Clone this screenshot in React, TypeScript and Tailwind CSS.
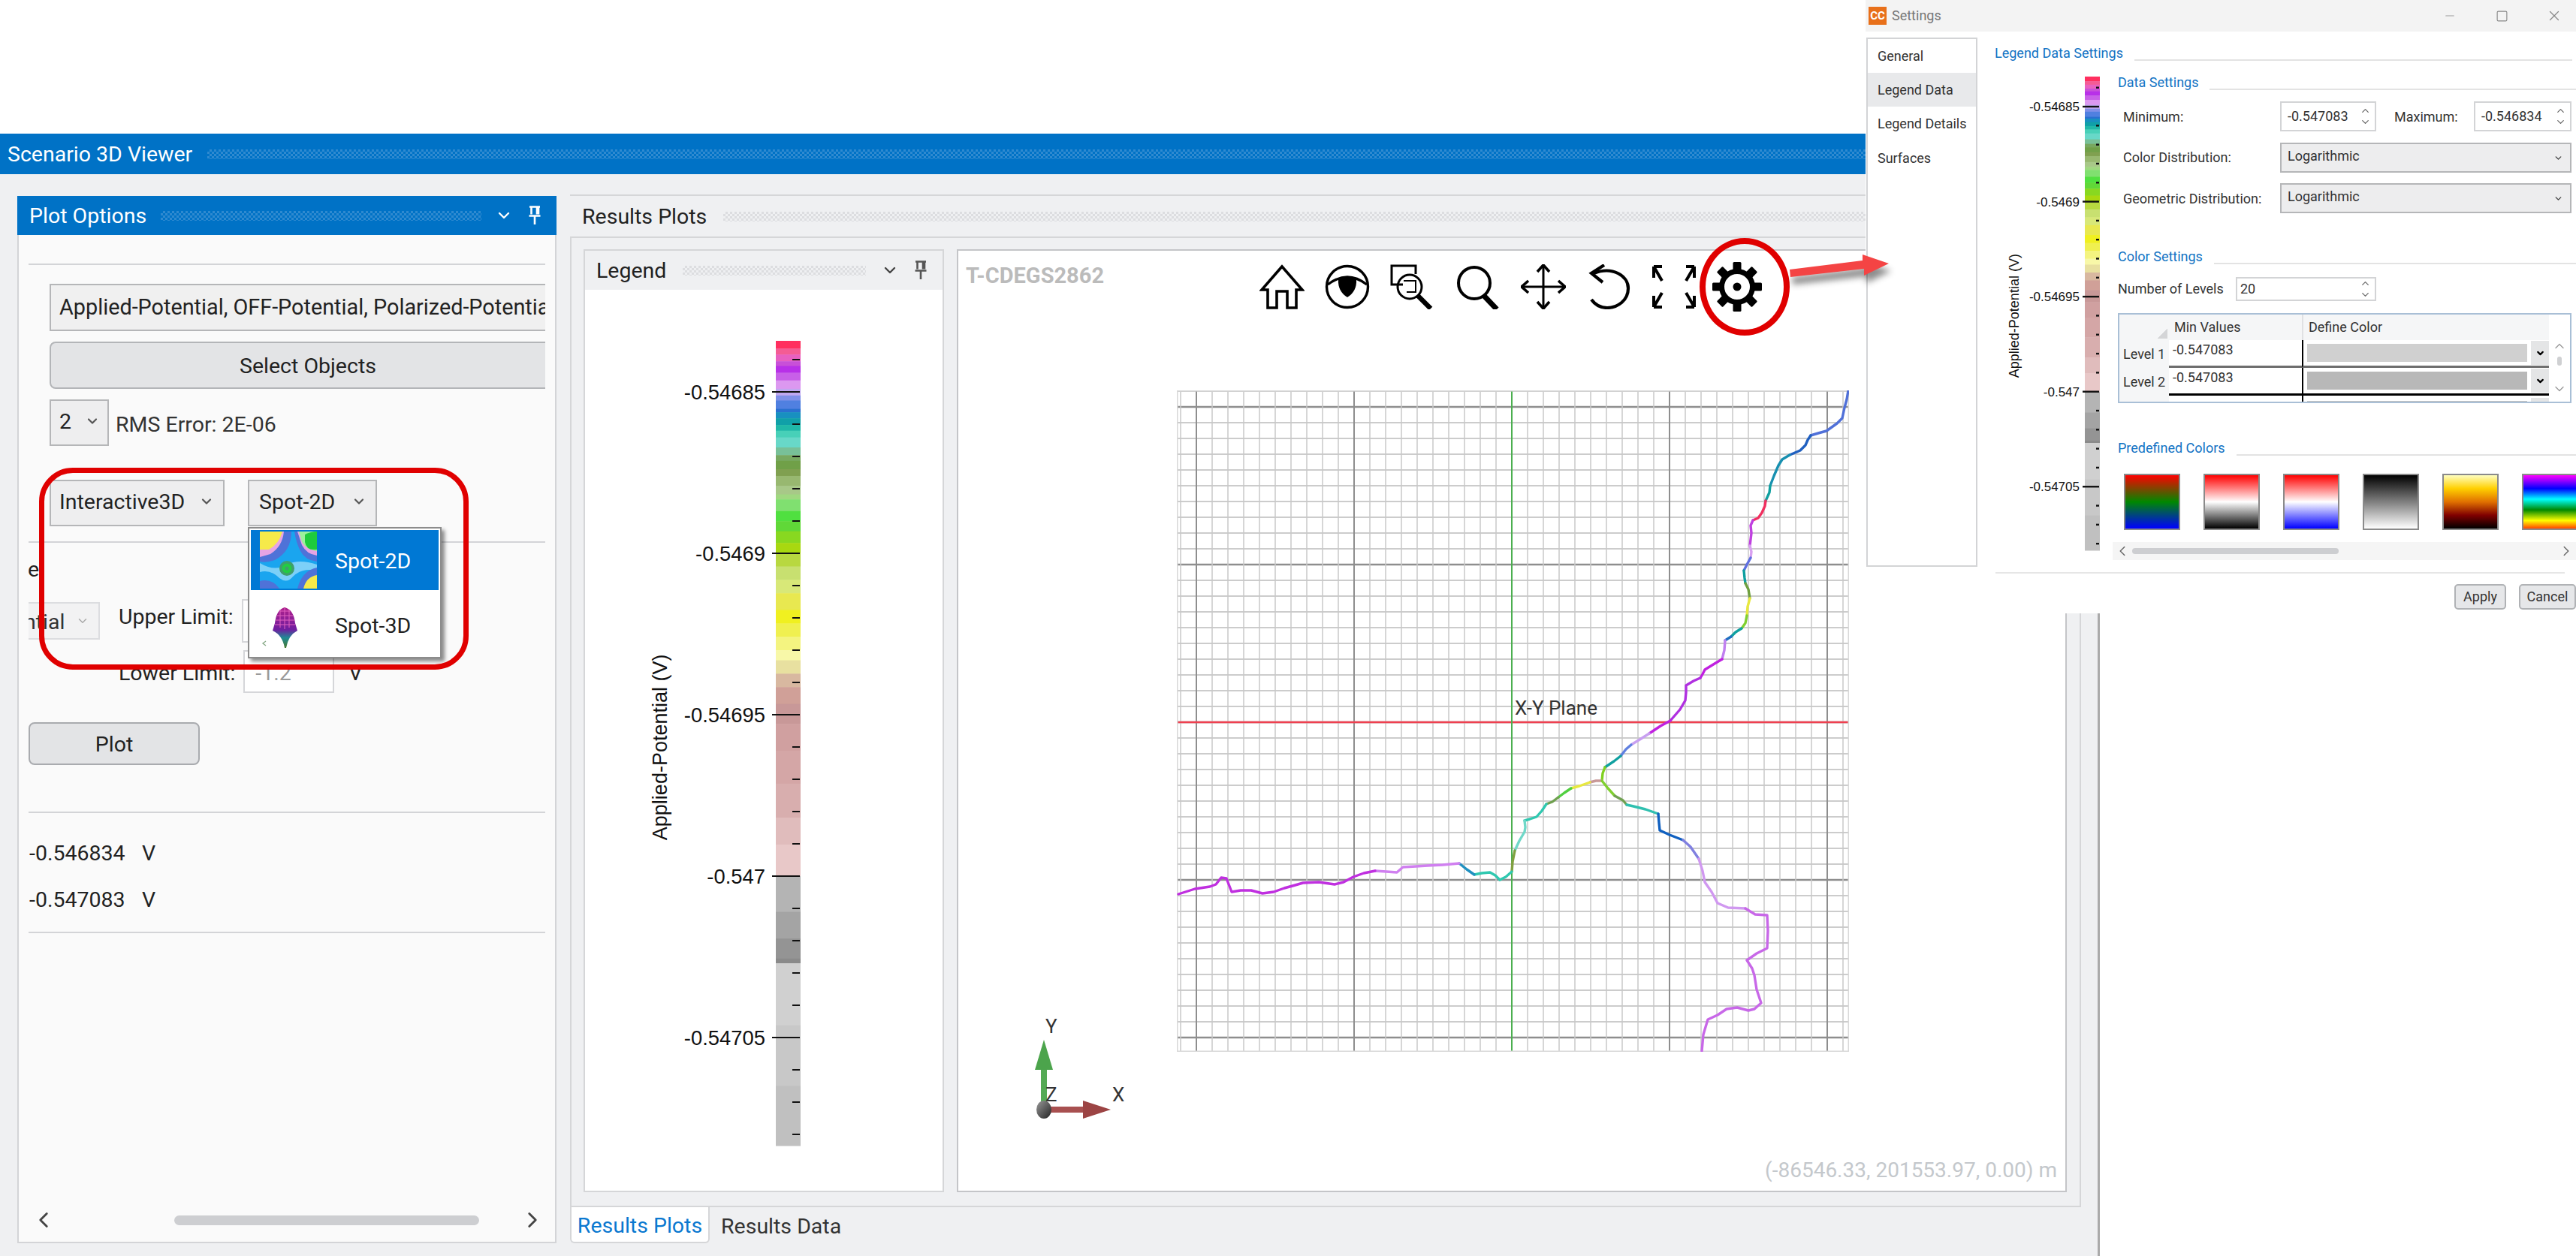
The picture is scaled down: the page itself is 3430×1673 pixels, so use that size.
import { ChevronDown, ChevronLeft, ChevronRight, ChevronUp, Minus, Square, X } from "lucide-react"

const gripBlue =
  "h-[13px] flex-1 bg-[repeating-conic-gradient(#2f8ad0_0_25%,transparent_0_50%)] bg-[length:6px_6px]"
const gripGray =
  "h-[13px] flex-1 bg-[repeating-conic-gradient(#dcdde0_0_25%,transparent_0_50%)] bg-[length:6px_6px]"

// colour bands of the legend, [position, colour]
const bands: [number, string][] = [
  [477, "#ff2f5f"], [500, "#f45c94"], [518, "#e860c0"], [538, "#c850d8"], [552, "#b830e8"],
  [572, "#c860e8"], [595, "#dc98f0"], [620, "#c0a8f0"], [640, "#8090e8"], [655, "#5080e0"],
  [680, "#2a70d0"], [690, "#1890c0"], [708, "#10a0a8"], [728, "#20b8a8"], [745, "#48d0b8"],
  [765, "#68d8c8"], [795, "#78c098"], [818, "#78a860"], [835, "#70a048"], [860, "#80a050"],
  [880, "#98b870"], [910, "#a8c888"], [935, "#a0d880"], [950, "#80e070"], [985, "#50e040"],
  [1015, "#60d838"], [1045, "#88d820"], [1080, "#a8d810"], [1110, "#b8d840"], [1150, "#c8e070"],
  [1190, "#d8e878"], [1230, "#e8e850"], [1280, "#f0f020"], [1320, "#f0f050"], [1360, "#f4f480"],
  [1400, "#f8f8a8"], [1430, "#e8e0a0"], [1470, "#d8b8a0"], [1510, "#d0a098"], [1560, "#c89898"],
  [1620, "#d0a0a0"], [1700, "#d4a6a6"], [1798, "#d8aeae"], [1900, "#e0bcbc"], [1980, "#e8c8c8"],
  [2074, "#b4b4b4"], [2180, "#a4a4a4"], [2260, "#949494"], [2320, "#8a8a8a"], [2334, "#d0d0d0"],
  [2518, "#c8c8c8"], [2700, "#c0c0c0"], [2878, "#b8b8b8"],
]

const majorLabels = ["-0.54685", "-0.5469", "-0.54695", "-0.547", "-0.54705"]

function LegendBar({
  width,
  height,
  barX,
  barY,
  barW,
  barH,
  labelSize,
  titleSize,
  titleX,
  majorOver,
  minorLen,
  tickW,
  labelGap,
}: {
  width: number
  height: number
  barX: number
  barY: number
  barW: number
  barH: number
  labelSize: number
  titleSize: number
  titleX: number
  majorOver: number
  minorLen: number
  tickW: number
  labelGap: number
}) {
  const pos = (z: number) => barY + ((z - 477) / 2401) * barH
  const tick = (k: number) => barY + ((68 + k * 43) / 1072) * barH
  const ks = Array.from({ length: 25 }, (_, i) => i - 1)
  const titleY = barY + barH * 0.505

  return (
    <svg width={width} height={height} className="shrink-0 font-['Liberation_Sans',sans-serif]">
      {bands.slice(0, -1).map(([z, c], i) => (
        <rect key={z} x={barX} y={pos(z)} width={barW} height={pos(bands[i + 1][0]) - pos(z) + 0.5} fill={c} />
      ))}
      {ks.map((k) =>
        k % 5 === 0 ? (
          <line key={k} x1={barX - majorOver} x2={barX + barW - 1} y1={tick(k)} y2={tick(k)} stroke="#111" strokeWidth={tickW} />
        ) : (
          <line key={k} x1={barX + barW - minorLen - 1} x2={barX + barW - 1} y1={tick(k)} y2={tick(k)} stroke="#111" strokeWidth={tickW} />
        ),
      )}
      {majorLabels.map((label, i) => (
        <text key={label} x={barX - majorOver - labelGap} y={tick(i * 5) + labelSize * 0.36} textAnchor="end" fontSize={labelSize} fill="#111">
          {label}
        </text>
      ))}
      <text
        x={titleX}
        y={titleY}
        fontSize={titleSize}
        fill="#111"
        textAnchor="middle"
        transform={`rotate(-90 ${titleX} ${titleY})`}
      >
        Applied-Potential (V)
      </text>
    </svg>
  )
}

function Pin({ color }: { color: string }) {
  return (
    <svg width="18" height="26" viewBox="0 0 18 26" fill="none">
      <path d="M2 1.5h14M4.5 1.5v10M12 1.5v10M14 1.5v10M1.5 13.5h15M9 14v11" stroke={color} strokeWidth="2.6" />
    </svg>
  )
}

function Combo({ label, className, textClass }: { label: string; className: string; textClass?: string }) {
  return (
    <div className={`flex shrink-0 items-center justify-between border-2 border-[#b5b6b8] bg-[#eeeeef] ${className}`}>
      <span className={`-mt-[3px] whitespace-nowrap ${textClass ?? ""}`}>{label}</span>
      <ChevronDown size={20} strokeWidth={2.6} className="-mt-[4px] shrink-0 text-[#555]" />
    </div>
  )
}

function Spot2DIcon() {
  return (
    <svg width="76" height="76" viewBox="0 0 76 76">
      <rect width="76" height="76" fill="#1aa5ef" />
      <path d="M0 42 Q20 54 36 44 Q52 36 76 44 V52 Q56 48 44 60 Q36 70 26 62 Q14 50 0 54Z" fill="#7cd0f8" />
      <path d="M0 0 H42 Q42 26 20 38 Q8 42 0 40Z" fill="#4f72d8" />
      <path d="M0 0 H32 Q30 20 14 30 L0 34Z" fill="#e6a4e4" />
      <path d="M0 0 H30 Q26 16 12 24 L0 24Z" fill="#f6ea4a" />
      <path d="M46 0 H76 V40 Q60 38 54 26 Q48 14 46 0Z" fill="#4f72d8" />
      <path d="M50 0 H76 V32 Q62 30 56 18Z" fill="#e6a4e4" />
      <path d="M52 0 H76 V26 Q62 24 56 14Z" fill="#9cf09c" />
      <path d="M60 4 Q68 0 76 0 V24 Q62 26 60 14Z" fill="#1ecb3c" />
      <circle cx="36" cy="49" r="10" fill="#3f9e6c" />
      <circle cx="36" cy="49" r="6.5" fill="#22cc44" />
      <circle cx="36" cy="49" r="2.5" fill="#3f9e6c" />
      <path d="M76 48 Q56 52 50 76 H76Z" fill="#4f72d8" />
      <path d="M76 58 Q62 60 58 76 H76Z" fill="#f6ea4a" />
      <path d="M0 66 Q16 62 26 76 H0Z" fill="#4f72d8" />
    </svg>
  )
}

function Spot3DIcon() {
  return (
    <svg width="76" height="76" viewBox="0 0 76 76">
      <defs>
        <linearGradient id="dome" x1="0" x2="0" y1="0" y2="1">
          <stop offset="0" stopColor="#b0208c" />
          <stop offset="0.55" stopColor="#6f1fa0" />
          <stop offset="0.75" stopColor="#1f8a94" />
          <stop offset="1" stopColor="#4a7a30" />
        </linearGradient>
      </defs>
      <path d="M33 17 Q45 20 47 38 L50 48 Q38 54 35 71 H33 Q30 54 17 48 L20 38 Q22 20 33 17Z" fill="url(#dome)" />
      <path d="M27 22H40M23 28H44M21 34H46M20 40H47M27 20V44M33 18V46M39 20V44" stroke="#e060c0" strokeWidth="1" />
      <path d="M8 62l-4 3 4 3" stroke="#8a8" strokeWidth="1.4" fill="none" />
    </svg>
  )
}

function PlotOptions() {
  return (
    <div className="flex h-full w-[718px] shrink-0 flex-col border-x-2 border-b-2 border-[#d3d4d7] bg-[#fafafa]">
      <div className="-mx-[2px] flex h-[52px] shrink-0 items-center bg-[#0072c6] pl-[16px] pr-[20px] text-white">
        <span className="mt-[2px] whitespace-nowrap">Plot Options</span>
        <div className={`ml-[19px] ${gripBlue}`} />
        <ChevronDown size={24} strokeWidth={2.4} className="ml-[18px]" />
        <div className="ml-[20px]">
          <Pin color="#fff" />
        </div>
      </div>

      <div className="mx-[13px] mt-[38px] flex flex-1 flex-col overflow-hidden">
        <div className="h-[2px] shrink-0 bg-[#d3d4d7]" />
        <div className="ml-[28px] mt-[25px] flex h-[63px] w-[700px] shrink-0 items-center border-2 border-[#b5b6b8] bg-[#f0f0f0] pl-[11px]">
          <span className="-mt-[2px] whitespace-nowrap text-[28.8px]">Applied-Potential, OFF-Potential, Polarized-Potentia</span>
        </div>
        <div className="ml-[28px] mt-[14px] flex h-[63px] w-[688px] shrink-0 items-center justify-center rounded-[8px] border-2 border-[#b3b5b8] bg-[#e3e4e6] pt-[3px]">
          Select Objects
        </div>
        <div className="ml-[28px] mt-[14px] flex shrink-0 items-center">
          <Combo label="2" className="h-[62px] w-[79px] pl-[11px] pr-[10px]" />
          <span className="ml-[9px] mt-[5px] whitespace-nowrap text-[#333]">RMS Error: 2E-06</span>
        </div>
        <div className="ml-[28px] mt-[45px] flex shrink-0 items-center">
          <Combo label="Interactive3D" className="h-[62px] w-[233px] pl-[11px] pr-[12px]" />
          <Combo label="Spot-2D" className="ml-[31px] h-[62px] w-[172px] pl-[13px] pr-[12px]" />
        </div>
        <div className="mt-[20px] h-[2px] shrink-0 bg-[#d3d4d7]" />
        <div className="mt-[18px] h-[36px] shrink-0 -translate-x-[1px] text-[#222]">e:</div>

        <div className="mt-[21px] flex h-[58px] shrink-0 items-center">
          <div className="flex h-[50px] w-[95px] items-center justify-between overflow-hidden border-y-2 border-r-2 border-[#dcdde0] bg-[#f2f2f3] pr-[12px]">
            <span className="-ml-[6px] mt-[4px] text-[#333]">ntial</span>
            <ChevronDown size={18} strokeWidth={2} className="text-[#aaa]" />
          </div>
          <span className="ml-[25px] -mt-[10px] whitespace-nowrap">Upper Limit:</span>
          <div className="ml-[11px] h-[58px] w-[121px] border-2 border-[#d5d6d9] bg-white" />
        </div>
        <div className="mt-[10px] flex h-[57px] shrink-0 items-center">
          <span className="ml-[120px] mt-[4px] whitespace-nowrap">Lower Limit:</span>
          <div className="ml-[11px] flex h-[57px] w-[121px] items-center border-2 border-[#d5d6d9] bg-white pl-[14px] pt-[4px] text-[#9a9a9a]">
            -1.2
          </div>
          <span className="ml-[19px] mt-[4px]">V</span>
        </div>

        <div className="mt-[39px] flex h-[57px] w-[228px] shrink-0 items-center justify-center rounded-[8px] border-2 border-[#a9abaf] bg-[#e3e4e6] pt-[2px]">
          Plot
        </div>
        <div className="mt-[62px] h-[2px] shrink-0 bg-[#d3d4d7]" />
        <div className="mt-[37px] flex h-[34px] shrink-0 items-center">
          <span className="w-[150px] pl-[1px]">-0.546834</span>
          <span className="ml-[1px]">V</span>
        </div>
        <div className="mt-[28px] flex h-[34px] shrink-0 items-center">
          <span className="w-[150px] pl-[1px]">-0.547083</span>
          <span className="ml-[1px]">V</span>
        </div>
        <div className="mt-[25px] h-[2px] shrink-0 bg-[#d3d4d7]" />

        <div className="mb-[12px] mt-auto flex shrink-0 items-center">
          <ChevronLeft size={34} strokeWidth={2} className="ml-[3px] text-[#444]" />
          <div className="ml-[157px] h-[13px] w-[406px] rounded-full bg-[#cdced1]" />
          <ChevronRight size={34} strokeWidth={2} className="ml-[54px] text-[#444]" />
        </div>
      </div>
    </div>
  )
}

function ToolbarIcons() {
  const gearAngles = [0, 45, 90, 135, 180, 225, 270, 315]
  return (
    <div className="flex items-center gap-[27px] text-black">
      <svg width="60" height="60" viewBox="0 0 60 60" fill="none" stroke="currentColor" strokeWidth="3.6">
        <path d="M30 3 L3 34 H11 V58 H23 V36 H37 V58 H49 V34 H57 Z" strokeLinejoin="miter" />
      </svg>
      <svg width="60" height="60" viewBox="0 0 60 60" fill="none" stroke="currentColor" strokeWidth="3.4">
        <circle cx="30" cy="30" r="27.5" />
        <path d="M4 27 Q30 7 56 27" />
        <path d="M18 20 Q30 14 42 20 Q43 36 30 44 Q17 36 18 20Z" fill="currentColor" stroke="none" />
      </svg>
      <svg width="60" height="60" viewBox="0 0 60 60" fill="none" stroke="currentColor" strokeWidth="3">
        <path d="M17 27 H2 V2 H34 V13" />
        <circle cx="26" cy="30" r="16" />
        <path d="M18 22 H34 V37 H22" strokeWidth="2" />
        <path d="M37 42 L54 59" strokeWidth="6.5" />
      </svg>
      <svg width="60" height="60" viewBox="0 0 60 60" fill="none" stroke="currentColor" strokeWidth="4">
        <circle cx="25" cy="25" r="21" />
        <path d="M38 42 L55 60" strokeWidth="7" />
      </svg>
      <svg width="60" height="60" viewBox="0 0 60 60" fill="none" stroke="currentColor" strokeWidth="3">
        <path d="M2 30 H58 M30 2 V58" />
        <path d="M22 10 L30 1 L38 10 M22 50 L30 59 L38 50 M10 22 L1 30 L10 38 M50 22 L59 30 L50 38" strokeWidth="3.6" />
      </svg>
      <svg width="60" height="60" viewBox="0 0 60 60" fill="none" stroke="currentColor" strokeWidth="4.2">
        <path d="M10 12 C 36 2, 56 16, 56 32 C 56 48, 42 58, 28 58 C 20 58, 12 54, 7 47" />
        <path d="M24 1 L7 12 L22 24" />
      </svg>
      <svg width="60" height="60" viewBox="0 0 60 60" fill="none" stroke="currentColor" strokeWidth="4">
        <path d="M3 3 H14 M3 3 V18 M3 3 L14 22" />
        <path d="M57 3 H46 M57 3 V18 M57 3 L46 22" />
        <path d="M3 57 H14 M3 57 V42 M3 57 L14 38" />
        <path d="M57 57 H46 M57 57 V42 M57 57 L46 38" />
      </svg>
      <svg width="66" height="68" viewBox="0 0 66 68" className="-ml-[6px]" fill="none" stroke="currentColor">
        {gearAngles.map((a) => (
          <rect key={a} x="27.5" y="1" width="11" height="13" rx="1.5" fill="currentColor" stroke="none" transform={`rotate(${a} 33 34)`} />
        ))}
        <circle cx="33" cy="34" r="20.5" strokeWidth="7" />
        <circle cx="33" cy="34" r="5.5" fill="currentColor" stroke="none" />
      </svg>
    </div>
  )
}

const segmentsTop: [string, string][] = [
  ["#5070d8", "2460,520 2458,532 2455,543 2452,557 2445,564 2431,574 2420,577 2410,580"],
  ["#2060c0", "2410,580 2406,586 2403,593 2396,600 2382,606"],
  ["#1890b0", "2382,606 2372,612 2367,620 2361,634 2356,647"],
  ["#10a0a0", "2356,647 2355,656 2350,667"],
  ["#f03060", "2350,667 2349,674 2345,683 2340,690 2333,693"],
  ["#c040e0", "2333,693 2330,700 2331,710 2329,727"],
  ["#d8a0f0", "2329,727 2331,735 2330,743"],
  ["#6070e0", "2330,743 2325,752 2321,760"],
  ["#10a0a0", "2321,760 2322,770 2323,777"],
  ["#70a040", "2323,777 2327,785 2329,797"],
  ["#e8e840", "2329,797 2326,808 2325,820"],
  ["#80d030", "2325,820 2323,830 2318,837"],
  ["#10a0a0", "2318,837 2310,842 2304,848"],
  ["#2070c0", "2304,848 2296,853"],
  ["#c080f0", "2296,853 2295,866 2292,878"],
  ["#c020e0", "2292,878 2282,884 2269,892 2266,898 2263,903"],
  ["#b030e0", "2263,903 2254,907 2244,913 2244,922 2243,933 2236,945 2223,960"],
  ["#c020e0", "2223,960 2210,967 2195,977"],
  ["#c8a0f0", "2195,977 2184,984 2171,992"],
  ["#6080e0", "2171,992 2164,998 2157,1007"],
  ["#10a0a0", "2157,1007 2148,1014 2136,1022"],
  ["#80d020", "2136,1022 2133,1030 2132,1040"],
  ["#c89898", "2132,1040 2124,1040 2116,1042"],
  ["#e8e840", "2116,1042 2102,1047 2091,1050"],
  ["#50d040", "2091,1050 2082,1056 2074,1062"],
  ["#70a050", "2074,1062 2066,1068 2058,1071"],
  ["#30c8b0", "2058,1071 2052,1080 2045,1088 2036,1091 2029,1093"],
  ["#70d8c8", "2029,1093 2030,1102 2029,1108 2022,1120 2016,1133"],
  ["#80a040", "2016,1133 2013,1148 2012,1161"],
  ["#30c8b0", "2012,1161 2004,1168 1996,1172 1990,1166 1983,1162 1972,1163 1962,1165"],
  ["#2090c0", "1962,1165 1952,1158 1942,1150"],
  ["#d080f0", "1942,1150 1920,1152 1900,1153 1884,1154 1867,1155 1859,1162 1845,1161 1830,1160"],
  ["#c030e0", "1830,1160 1815,1163 1801,1168 1788,1175 1776,1178 1755,1175 1734,1176 1720,1180 1709,1183 1695,1188 1680,1190 1665,1186 1651,1186 1639,1188 1632,1170 1625,1169 1618,1178 1610,1181 1590,1184 1568,1191"],
  ["#80d030", "2132,1040 2140,1050 2149,1060"],
  ["#70a050", "2149,1060 2160,1066 2165,1072"],
  ["#30c0b0", "2165,1072 2174,1074 2190,1078 2207,1084"],
  ["#1060c0", "2207,1084 2208,1096 2209,1106 2222,1112 2240,1119"],
  ["#8080e0", "2240,1119 2250,1128 2261,1144"],
  ["#d098f0", "2261,1144 2266,1160 2269,1175 2278,1188 2286,1203 2300,1209 2323,1210"],
  ["#c868e8", "2323,1210 2336,1218 2352,1219 2353,1240 2352,1263 2338,1270 2325,1279 2332,1290 2335,1299 2338,1318 2344,1336 2335,1344 2327,1346 2312,1342 2298,1344 2286,1352 2273,1358 2267,1378 2265,1400"],
]

function GridPlot() {
  const vertical = Array.from({ length: 43 }, (_, i) => i - 21)
  const horizontal = Array.from({ length: 42 }, (_, i) => i - 21)
  return (
    <svg width="895" height="881" viewBox="1566 520 895 881" className="ml-[291px] mt-[104px] shrink-0 font-['Roboto',sans-serif]">
      {horizontal.map((k) => (
        <line
          key={k}
          x1={1566}
          x2={2461}
          y1={962 + k * 21}
          y2={962 + k * 21}
          stroke={k % 10 === 0 ? "#8e8e8e" : "#cccccc"}
          strokeWidth={k % 10 === 0 ? 2.5 : 2}
        />
      ))}
      {vertical.map((k) => (
        <line
          key={k}
          x1={2012 + k * 21}
          x2={2012 + k * 21}
          y1={520}
          y2={1401}
          stroke={k % 10 === 0 ? "#8e8e8e" : "#c8c8c8"}
          strokeWidth={k % 10 === 0 ? 2 : 1.5}
        />
      ))}
      <line x1={1566} x2={2461} y1={962} y2={962} stroke="#f04050" strokeWidth="2.5" />
      <line x1={2012} x2={2012} y1={520} y2={1401} stroke="#4caf50" strokeWidth="2" />
      <rect x="1566" y="520" width="895" height="881" fill="none" stroke="#d8d8d8" strokeWidth="3" />
      {segmentsTop.map(([c, pts], i) => (
        <polyline key={i} points={pts} fill="none" stroke={c} strokeWidth="3.4" strokeLinejoin="round" strokeLinecap="round" />
      ))}
      <text x="2016" y="952" fontSize="26" fill="#333">
        X-Y Plane
      </text>
    </svg>
  )
}

function Triad() {
  return (
    <svg width="130" height="140" viewBox="1370 1350 130 140" className="absolute left-[96px] top-[1018px] font-['Roboto',sans-serif]">
      <defs>
        <linearGradient id="ball" x1="0" x2="1" y1="0" y2="1">
          <stop offset="0" stopColor="#999" />
          <stop offset="1" stopColor="#222" />
        </linearGradient>
      </defs>
      <rect x="1384" y="1420" width="8" height="50" fill="#55aa55" />
      <path d="M1388 1383 L1400 1423 H1376Z" fill="#4ca44c" />
      <rect x="1395" y="1472" width="46" height="8" fill="#a85050" />
      <path d="M1477 1476 L1440 1464 V1488Z" fill="#9c4444" />
      <ellipse cx="1388" cy="1476" rx="10" ry="12" fill="url(#ball)" />
      <text x="1390" y="1374" fontSize="26" fill="#333">Y</text>
      <text x="1390" y="1465" fontSize="26" fill="#333">Z</text>
      <text x="1479" y="1465" fontSize="26" fill="#333">X</text>
    </svg>
  )
}

function ResultsPlots() {
  return (
    <div className="-mt-[2px] flex h-[calc(100%+2px)] flex-1 flex-col">
      <div className="flex h-[56px] shrink-0 items-center border-t-2 border-[#d5d6d8] pl-[16px] pr-[20px]">
        <span className="mt-[2px] whitespace-nowrap">Results Plots</span>
        <div className={`ml-[22px] ${gripGray}`} />
      </div>
      <div className="flex min-h-0 flex-1 gap-[17px] border-x-2 border-y-2 border-[#d5d6d8] pb-[18px] pl-[16px] pr-[17px] pt-[15px]">
        <div className="flex w-[480px] shrink-0 flex-col border-2 border-[#d5d6d8] bg-white">
          <div className="flex h-[52px] shrink-0 items-center bg-[#eff0f2] pl-[15px] pr-[20px]">
            <span className="mt-[2px]">Legend</span>
            <div className={`ml-[22px] ${gripGray}`} />
            <ChevronDown size={24} strokeWidth={2.4} className="ml-[20px] text-[#444]" />
            <div className="ml-[20px]">
              <Pin color="#555" />
            </div>
          </div>
          <div className="ml-[79px] mt-[65px]">
            <LegendBar
              width={220}
              height={1085}
              barX={175}
              barY={3}
              barW={33}
              barH={1072}
              labelSize={27.4}
              titleSize={27}
              titleX={30}
              majorOver={5}
              minorLen={10}
              tickW={2}
              labelGap={9}
            />
          </div>
        </div>

        <div className="relative flex flex-1 flex-col border-2 border-[#c4c5c8] bg-white">
          <div className="flex pl-[10px] pt-[14px]">
            <div className="w-[391px] whitespace-nowrap pt-[1px] text-[29px] font-bold leading-[36px] text-[#bbbbbb]">T-CDEGS2862</div>
            <ToolbarIcons />
          </div>
          <GridPlot />
          <Triad />
          <div className="absolute bottom-[9px] right-[11px] whitespace-nowrap text-[28px] text-[#c4c8cc]">(-86546.33, 201553.97, 0.00) m</div>
        </div>
      </div>
      <div className="flex h-[48px] shrink-0 items-center">
        <div className="flex h-full w-[186px] items-center justify-center rounded-b-[6px] border-x-2 border-b-2 border-[#d5d6d8] bg-white pt-[3px] text-[#0a78d0]">
          Results Plots
        </div>
        <span className="ml-[15px] mt-[3px] text-[#333]">Results Data</span>
      </div>
    </div>
  )
}

function SectionTitle({ title, className }: { title: string; className?: string }) {
  return (
    <div className={`flex h-[24px] shrink-0 items-end ${className ?? ""}`}>
      <span className="self-center whitespace-nowrap leading-[24px] text-[#1273c4]">{title}</span>
      <div className="mb-[2px] ml-[15px] h-[2px] flex-1 bg-[#e3e3e3]" />
    </div>
  )
}

function SpinInput({ value, className }: { value: string; className: string }) {
  return (
    <div className={`flex items-center justify-between border-2 border-[#d3d4d6] bg-white pl-[8px] pr-[5px] ${className}`}>
      <span>{value}</span>
      <div className="flex flex-col text-[#666]">
        <ChevronUp size={15} strokeWidth={2} />
        <ChevronDown size={15} strokeWidth={2} />
      </div>
    </div>
  )
}

function DialogSelect() {
  return (
    <div className="flex h-[40px] w-[388px] items-center justify-between border-2 border-[#b5b6b8] bg-[#ededee] pl-[8px] pr-[9px]">
      <span className="-mt-[4px]">Logarithmic</span>
      <ChevronDown size={13} strokeWidth={2.6} className="text-[#444]" />
    </div>
  )
}

function LevelRow({ level, value, swatch, lineClass }: { level: string; value: string; swatch: string; lineClass: string }) {
  return (
    <div className="flex h-[37px]">
      <div className="flex w-[66px] shrink-0 items-center bg-[#f5f6f7] pl-[5px]">{level}</div>
      <div className={`w-[177px] shrink-0 pl-[5px] leading-[26px] ${lineClass}`}>{value}</div>
      <div className={`flex w-[330px] shrink-0 items-center border-l-2 border-l-black pl-[5px] pr-[1px] ${lineClass}`}>
        <div className={`h-[24px] w-[293px] ${swatch}`} />
        <div className="ml-[5px] flex h-[32px] w-[24px] items-center justify-center bg-[#e4e5e6]">
          <ChevronDown size={13} strokeWidth={4} className="text-black" />
        </div>
      </div>
    </div>
  )
}

const swatches = [
  "bg-[linear-gradient(#f00,#080_50%,#00f)]",
  "bg-[linear-gradient(#f00,#fff_50%,#000)]",
  "bg-[linear-gradient(#f00,#fff_50%,#00f)]",
  "bg-[linear-gradient(#000,#fff)]",
  "bg-[linear-gradient(#ffffc0,#ffd000_25%,#e07000_50%,#800000_75%,#000)]",
  "bg-[linear-gradient(#f0f,#00f_25%,#0ff_45%,#080_65%,#ff0_85%,#f40)]",
]

function SettingsDialog() {
  return (
    <div className="absolute right-0 top-0 h-[817px] w-[946px] overflow-hidden bg-white text-[18px] leading-[24px] text-[#333]">
      <div className="flex h-[42px] items-center bg-[#f3f3f3] pl-[4px] pr-[18px]">
        <div className="flex h-[24px] w-[24px] items-center justify-center bg-[#e8701a] text-[15px] font-bold leading-none text-white">CC</div>
        <span className="ml-[7px] text-[#777]">Settings</span>
        <Minus size={18} strokeWidth={1.6} className="ml-auto text-[#999]" />
        <Square size={17} strokeWidth={1.6} className="ml-[52px] text-[#888]" />
        <X size={22} strokeWidth={1.4} className="ml-[50px] text-[#888]" />
      </div>
      <div className="flex">
        <div className="ml-[1px] mt-[8px] h-[705px] w-[148px] shrink-0 border-2 border-[#d3d4d6]">
          <div className="flex h-[45px] items-center pl-[13px]">General</div>
          <div className="flex h-[45px] items-center bg-[#e8e9eb] pl-[13px]">Legend Data</div>
          <div className="flex h-[46px] items-center pl-[13px]">Legend Details</div>
          <div className="flex h-[46px] items-center pl-[13px]">Surfaces</div>
        </div>

        <div className="ml-[23px] flex min-w-0 flex-1 flex-col pt-[17px]">
          <SectionTitle title="Legend Data Settings" className="mr-[5px]" />
          <div className="mt-[7px] flex h-[670px]">
            <div className="ml-[4px]">
              <LegendBar
                width={140}
                height={670}
                barX={116}
                barY={12}
                barW={20}
                barH={631}
                labelSize={17}
                titleSize={18}
                titleX={28}
                majorOver={3}
                minorLen={4}
                tickW={2.4}
                labelGap={4}
              />
            </div>
            <div className="ml-[20px] flex min-w-0 flex-1 flex-col">
              <SectionTitle title="Data Settings" className="mt-[8px]" />
              <div className="mt-[13px] flex h-[40px] w-[604px] items-center pl-[7px]">
                <span className="mt-[2px] w-[209px]">Minimum:</span>
                <SpinInput value="-0.547083" className="h-[40px] w-[128px]" />
                <span className="ml-[24px] mt-[2px] w-[106px]">Maximum:</span>
                <SpinInput value="-0.546834" className="h-[40px] w-[130px]" />
              </div>
              <div className="mt-[15px] flex items-center pl-[7px]">
                <span className="w-[209px]">Color Distribution:</span>
                <DialogSelect />
              </div>
              <div className="mt-[14px] flex items-center pl-[7px]">
                <span className="mt-[2px] w-[209px] whitespace-nowrap">Geometric Distribution:</span>
                <DialogSelect />
              </div>
              <SectionTitle title="Color Settings" className="mt-[46px]" />
              <div className="mt-[15px] flex items-center">
                <span className="w-[157px]">Number of Levels</span>
                <SpinInput value="20" className="h-[32px] w-[187px] !pl-[4px]" />
              </div>
              <div className="mt-[16px] h-[120px] w-[604px] overflow-hidden border-2 border-[#a9bfd6] bg-white">
                <div className="flex">
                  <div className="w-[572px]">
                    <div className="flex h-[34px] bg-[#f5f6f7]">
                      <div className="flex w-[66px] items-end justify-end pb-[2px] pr-[2px]">
                        <div className="h-[14px] w-[14px] bg-[linear-gradient(135deg,transparent_50%,#d4d5d7_50%)]" />
                      </div>
                      <div className="flex w-[177px] items-center pl-[7px]">Min Values</div>
                      <div className="flex w-[329px] items-center border-l-2 border-[#e0e1e3] pl-[7px]">Define Color</div>
                    </div>
                    <LevelRow level="Level 1" value="-0.547083" swatch="bg-[#d0d0d0]" lineClass="border-b-[3px] border-b-[#6e6e6e]" />
                    <LevelRow level="Level 2" value="-0.547083" swatch="bg-[#b8b8b8]" lineClass="border-b-[3px] border-b-black" />
                    <LevelRow level="" value="" swatch="bg-[#c0c0c0]" lineClass="" />
                  </div>
                  <div className="flex h-[120px] w-[30px] flex-col items-center bg-white pt-[32px] text-[#999]">
                    <ChevronUp size={20} strokeWidth={1.6} />
                    <div className="mt-[4px] h-[12px] w-[6px] rounded-full bg-[#cfd0d2]" />
                    <ChevronDown size={20} strokeWidth={1.6} className="mt-[21px]" />
                  </div>
                </div>
              </div>
              <SectionTitle title="Predefined Colors" className="mt-[48px]" />
              <div className="ml-[8px] mt-[22px] flex h-[75px] gap-[31px]">
                {swatches.map((s) => (
                  <div key={s} className={`h-[75px] w-[75px] shrink-0 border-2 border-[#8a8a8a] ${s}`} />
                ))}
              </div>
              <div className="-ml-[7px] mt-[16px] flex h-[24px] w-[617px] items-center bg-[#f5f5f5]">
                <ChevronLeft size={22} strokeWidth={1.6} className="ml-[2px] text-[#666]" />
                <div className="ml-[2px] h-[8px] w-[275px] rounded-full bg-[#cdced1]" />
                <ChevronRight size={22} strokeWidth={1.6} className="ml-auto mr-[2px] text-[#666]" />
              </div>
            </div>
          </div>
          <div className="ml-[1px] mt-[2px] h-[2px] w-[758px] bg-[#e6e6e6]" />
          <div className="mt-[14px] flex justify-end">
            <div className="flex h-[34px] w-[69px] items-center justify-center rounded-[5px] border-2 border-[#b0b2b5] bg-[#e6e7e9]">Apply</div>
            <div className="ml-[17px] flex h-[34px] w-[76px] items-center justify-center rounded-[5px] border-2 border-[#b0b2b5] bg-[#e6e7e9]">Cancel</div>
          </div>
        </div>
      </div>
    </div>
  )
}

export default function App() {
  return (
    <div className="relative h-[1673px] w-[3430px] overflow-hidden bg-white font-['Roboto',sans-serif] text-[28.5px] leading-[36px] text-[#222]">
      <div className="flex h-full w-[2796px] flex-col pt-[178px]">
        <div className="flex h-[54px] shrink-0 items-center bg-[#0072c6] pl-[10px] text-white">
          <span className="mt-[2px] whitespace-nowrap">Scenario 3D Viewer</span>
          <div className={`ml-[20px] ${gripBlue}`} />
        </div>
        <div className="flex min-h-0 flex-1 border-r-[3px] border-[#aaaaaa] bg-[#eff0f2] pb-[17px] pl-[23px] pr-[22px] pt-[29px]">
          <PlotOptions />
          <div className="w-[18px] shrink-0" />
          <ResultsPlots />
        </div>
      </div>

      {/* dropdown of the Spot list, open over the panel */}
      <div className="absolute left-[330px] top-[702px] w-[258px] border-2 border-[#8c8c8c] bg-white p-[2px] shadow-[4px_4px_5px_rgba(0,0,0,0.45)]">
        <div className="flex h-[80px] items-center bg-[#0078d4] pl-[12px] text-white">
          <Spot2DIcon />
          <span className="ml-[24px] mt-[4px]">Spot-2D</span>
        </div>
        <div className="flex h-[87px] items-center pl-[12px]">
          <Spot3DIcon />
          <span className="ml-[24px] mt-[8px]">Spot-3D</span>
        </div>
      </div>

      <SettingsDialog />

      {/* call-outs drawn on top of the screenshot */}
      <div className="absolute left-[52px] top-[623px] h-[269px] w-[572px] rounded-[45px] border-[7px] border-[#e00000]" />
      <div className="absolute left-[2263px] top-[317px] h-[130px] w-[120px] rounded-[50%] border-[8px] border-[#e00000]" />
      <svg width="160" height="60" viewBox="2370 330 160 60" className="absolute left-[2370px] top-[330px] drop-shadow-[3px_10px_4px_rgba(0,0,0,0.45)]">
        <path d="M2383 359 L2480 347 L2480 339 L2515 351 L2482 367 L2482 358 L2384 369Z" fill="#f44444" />
      </svg>
    </div>
  )
}
